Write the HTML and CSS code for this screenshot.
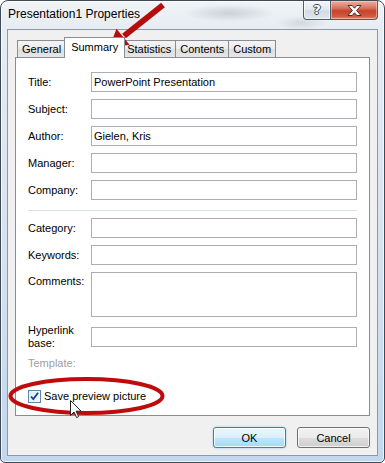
FILE: index.html
```html
<!DOCTYPE html>
<html lang="en">
<head>
    <meta charset="UTF-8">
    <title>Presentation1 Properties</title>
    <link rel="stylesheet" href="styles.css">
</head>
<body>
    <div class="window">
        <div class="titlebar">
            <span class="caption">Presentation1 Properties</span>
            <div class="caption-buttons">
                <div class="cap-btn help"><span>?</span></div>
                <div class="cap-btn close">
                    <svg width="15" height="11" viewBox="0 0 15 11">
                        <path d="M1 0.5h4.2l2.3 2.7 2.3-2.7h4.2l-4.4 5 4.4 5h-4.2l-2.3-2.7-2.3 2.7h-4.2l4.4-5z" fill="#fff" stroke="#4b3028" stroke-width="1"/>
                    </svg>
                </div>
            </div>
        </div>

        <div class="client">
            <div class="tabs">
                <div class="tab">General</div>
                <div class="tab active">Summary</div>
                <div class="tab">Statistics</div>
                <div class="tab">Contents</div>
                <div class="tab">Custom</div>
            </div>

            <div class="panel">
                <div class="fields">
                    <label>Title:</label>
                    <input type="text" value="PowerPoint Presentation">
                    <label>Subject:</label>
                    <input type="text">
                    <label>Author:</label>
                    <input type="text" value="Gielen, Kris">
                    <label>Manager:</label>
                    <input type="text">
                    <label>Company:</label>
                    <input type="text">

                    <div class="sep"></div>

                    <label>Category:</label>
                    <input type="text">
                    <label>Keywords:</label>
                    <input type="text">
                    <label class="top">Comments:</label>
                    <textarea></textarea>
                    <label class="top">Hyperlink<br>base:</label>
                    <input type="text" class="hyperlink">
                    <label class="top disabled">Template:</label>
                    <div></div>
                </div>

                <div class="check">
                    <span class="box">
                        <svg width="9" height="9" viewBox="0 0 9 9">
                            <path d="M1 4.5l2.3 2.6 4.8-6.3" fill="none" stroke="#1f3a8f" stroke-width="1.8"/>
                        </svg>
                    </span>
                    <span>Save preview picture</span>
                </div>
            </div>

            <div class="buttons">
                <button class="btn default">OK</button>
                <button class="btn">Cancel</button>
            </div>
        </div>

        <!-- red annotations drawn on top of the dialog -->
        <svg class="annotations" width="385" height="463" viewBox="0 0 385 463">
            <line x1="163" y1="5" x2="124" y2="36" stroke="#b30d0d" stroke-width="6"/>
            <polygon points="109,48 129.5,44.8 116.5,28.8" fill="#b30d0d"/>
            <ellipse cx="86.5" cy="396" rx="76" ry="17" fill="none" stroke="#bf0b0b" stroke-width="4"/>
            <path d="M70.5 400.5v15l3.5-3.5 2.6 5.6 2-1-2.5-5.4h5z" fill="#fff" stroke="#222" stroke-width="1"/>
        </svg>
    </div>
</body>
</html>
```

FILE: styles.css
```css
* {
    box-sizing: border-box;
}
body {
    margin: 0;
    font-family: "Liberation Sans", Arial, sans-serif;
    font-size: 11px;
    color: #000;
    background: #fff;
}
.window {
    position: relative;
    width: 385px;
    height: 463px;
    display: flex;
    flex-direction: column;
    padding: 0 6px 6px;
    border: 1px solid #3f4a57;
    border-radius: 8px 8px 5px 5px;
    background:
        radial-gradient(ellipse 45px 9px at 228px 12px, rgba(120, 128, 138, 0.28), transparent),
        radial-gradient(ellipse 25px 7px at 300px 22px, rgba(120, 128, 138, 0.2), transparent),
        linear-gradient(180deg, #f1f3f6 0, #e6ecf2 30px, #d3e1ef 60%, #c2d7ee 100%);
    box-shadow: inset 0 0 0 1px rgba(255, 255, 255, 0.7);
    overflow: hidden;
}
.titlebar {
    display: flex;
    align-items: flex-start;
    height: 28px;
    padding-left: 1px;
}
.caption {
    font-size: 12px;
    line-height: 27px;
    color: #000;
}
.caption-buttons {
    display: flex;
    margin-left: auto;
}
.cap-btn {
    height: 19px;
    display: flex;
    align-items: center;
    justify-content: center;
    border: 1px solid #4f5b6a;
    border-top: none;
}
.help {
    width: 28px;
    margin-right: -1px;
    border-radius: 0 0 0 4px;
    background: linear-gradient(180deg, #f3f6f9 0, #e4e9ef 45%, #d2dbe5 55%, #dfe6ee 100%);
    box-shadow: inset 0 0 0 1px rgba(255, 255, 255, 0.6);
}
.help span {
    font-family: "DejaVu Sans", sans-serif;
    font-weight: bold;
    font-size: 13px;
    line-height: 14px;
    color: #fff;
    text-shadow: 1px 0 #3c4755, -1px 0 #3c4755, 0 1px #3c4755, 0 -1px #3c4755;
}
.close {
    width: 48px;
    border-radius: 0 0 4px 0;
    background: linear-gradient(180deg, #eab0a2 0, #d9725c 40%, #c6432c 55%, #d2583e 85%, #e48b6e 100%);
    box-shadow: inset 0 0 0 1px rgba(255, 230, 220, 0.45);
}
.close svg {
    display: block;
}
.client {
    flex: 1;
    display: flex;
    flex-direction: column;
    padding: 7px 7px 0;
    background: #f0f0f0;
    border: 1px solid #8e99a6;
}
.tabs {
    display: flex;
    align-items: flex-end;
    height: 20px;
    padding-left: 2px;
}
.tab {
    height: 17px;
    padding: 0 4px;
    line-height: 16px;
    border: 1px solid #898c95;
    border-bottom: none;
    background: linear-gradient(180deg, #f4f4f4 0, #ebebeb 50%, #dedede 51%, #e6e6e6 100%);
    white-space: nowrap;
}
.tab + .tab {
    margin-left: -1px;
}
.tab.active {
    position: relative;
    z-index: 1;
    height: 21px;
    margin: 0 -2px -1px;
    padding: 1px 6px 3px;
    background: #fff;
}
.panel {
    padding: 14px 11px 12px 12px;
    background: #fff;
    border: 1px solid #898c95;
}
.fields {
    display: grid;
    grid-template-columns: 63px 266px;
    row-gap: 7px;
    align-items: center;
}
.fields label {
    line-height: 13px;
}
.fields label.top {
    align-self: start;
    padding-top: 3px;
}
.fields label.disabled {
    color: #a0a0a0;
}
input, textarea {
    display: block;
    width: 266px;
    height: 20px;
    margin: 0;
    padding: 0 2px;
    font: inherit;
    color: #000;
    border: 1px solid #abadb3;
    background: #fff;
    outline: none;
}
textarea {
    height: 45px;
    resize: none;
}
.fields .hyperlink {
    align-self: start;
    margin-top: 3px;
}
.fields label.top:nth-last-child(4) {
    padding-top: 0;
}
.fields label.disabled {
    padding-top: 0;
}
.sep {
    grid-column: 1 / -1;
    height: 1px;
    margin-top: 3px;
    background: #d5dfe7;
}
.check {
    display: flex;
    align-items: center;
    gap: 3px;
    margin-top: 20px;
    line-height: 13px;
}
.box {
    width: 13px;
    height: 13px;
    display: flex;
    align-items: center;
    justify-content: center;
    border: 1px solid #5b87a8;
    background: linear-gradient(135deg, #d6ebf8 0, #f4fafd 100%);
    box-shadow: inset 0 0 0 1px #eef7fd;
}
.box svg {
    display: block;
}
.buttons {
    display: flex;
    justify-content: flex-end;
    gap: 11px;
    margin-top: 11px;
}
.btn {
    width: 73px;
    height: 21px;
    padding: 0;
    font: inherit;
    color: #000;
    border: 1px solid #707070;
    border-radius: 3px;
    background: linear-gradient(180deg, #f2f2f2 0, #ebebeb 50%, #dddddd 51%, #cfcfcf 100%);
    box-shadow: inset 0 0 0 1px rgba(255, 255, 255, 0.7);
}
.btn.default {
    border-color: #3c7fb1;
    background: linear-gradient(180deg, #eaf6fd 0, #d9f0fc 50%, #bee6fd 51%, #a7d9f5 100%);
    box-shadow: inset 0 0 0 1px rgba(255, 255, 255, 0.8), 0 0 2px #7cc5ef;
}
.annotations {
    position: absolute;
    top: -1px;
    left: -1px;
    pointer-events: none;
}
```
